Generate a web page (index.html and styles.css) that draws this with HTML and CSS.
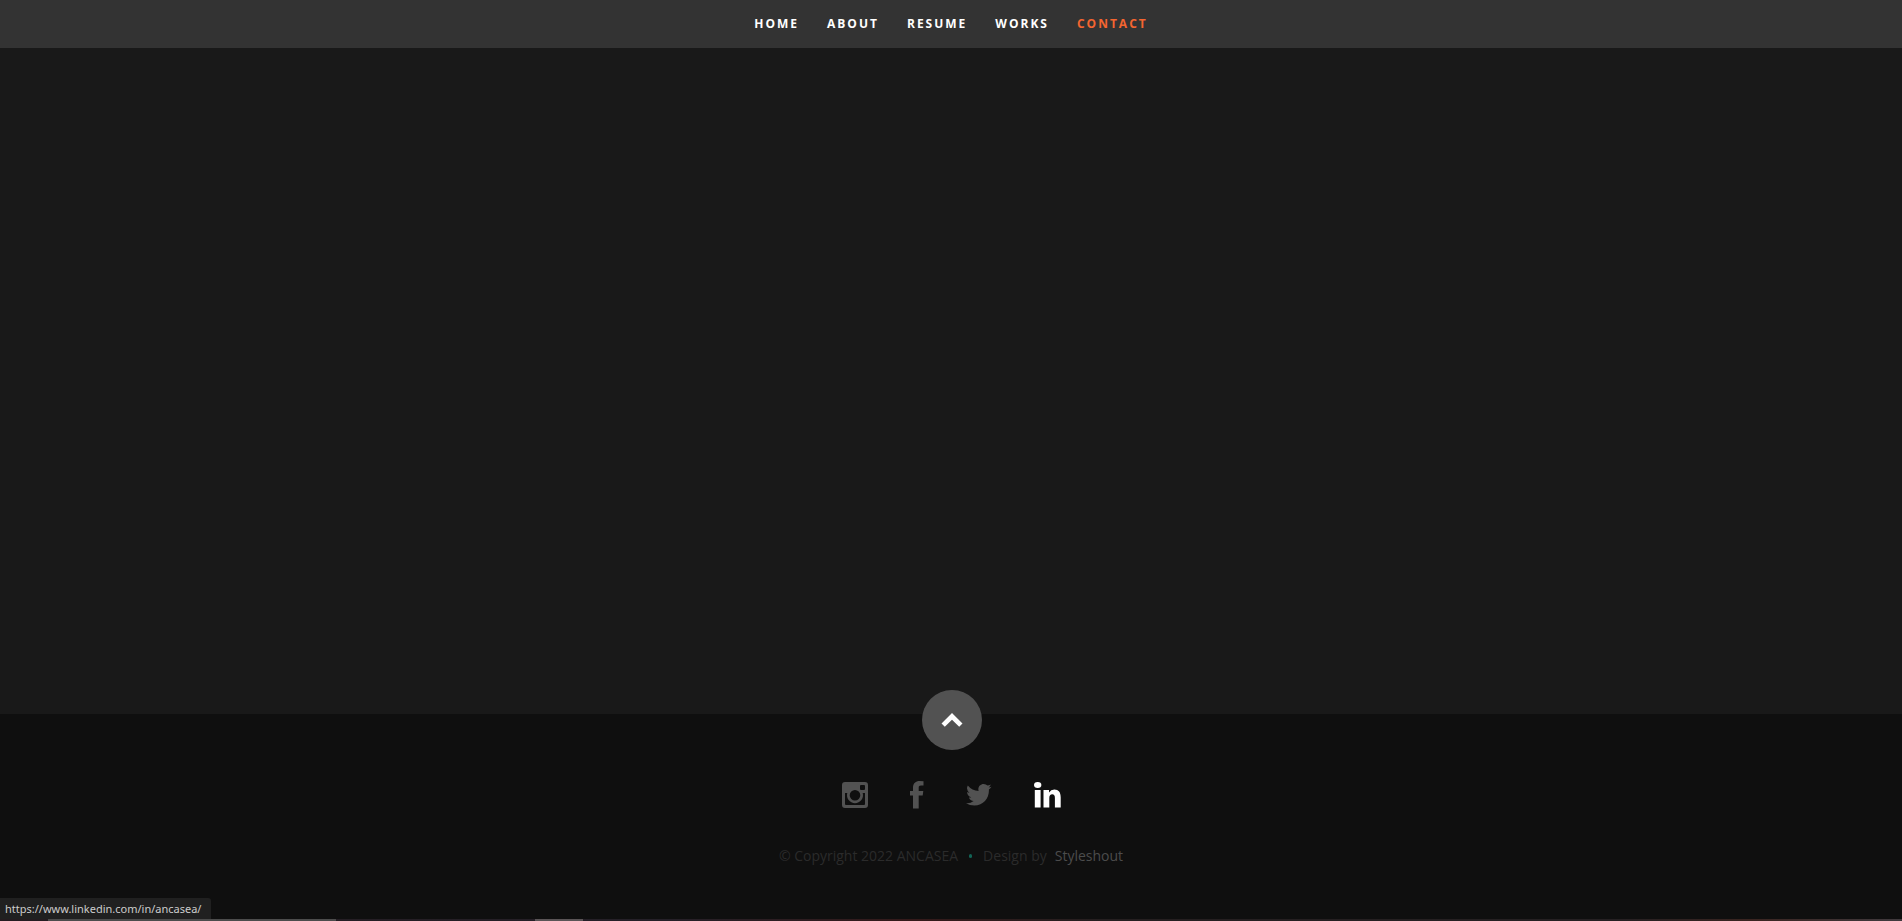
FILE: index.html
```html
<!DOCTYPE html>
<html lang="en">
<head>
<meta charset="utf-8">
<title>ANCASEA</title>
<link rel="stylesheet" href="styles.css">
</head>
<body>
<header class="site-header">
  <nav class="nav" aria-label="Main">
    <a class="nav-link" href="#home">HOME</a>
    <a class="nav-link" href="#about">ABOUT</a>
    <a class="nav-link" href="#resume">RESUME</a>
    <a class="nav-link" href="#works">WORKS</a>
    <a class="nav-link nav-link-current" href="#contact">CONTACT</a>
  </nav>
</header>
<main class="contact" id="contact"></main>
<footer class="site-footer">
  <a class="go-top" href="#home" aria-label="Back to top">
    <svg width="22" height="14" viewBox="0 0 22 14"><path fill="#fff" d="M11 0 21.500 10.500 18.200 13.800 11 6.800 3.800 13.800 .5 10.500Z"/></svg>
  </a>
  <div class="social">
    <a class="social-link" href="#instagram" aria-label="Instagram">
      <svg width="26" height="26" viewBox="0 0 26 26"><path fill="currentColor" fill-rule="evenodd" d="M3 0H23Q26 0 26 3V23Q26 26 23 26H3Q0 26 0 23V3Q0 0 3 0ZM19 3Q18 3 18 4V7Q18 8 19 8H22Q23 8 23 7V4Q23 3 22 3ZM3 11V22Q3 23 4 23H22Q23 23 23 22V11H20.700A8 8 0 1 1 5.300 11ZM13 8A5.300 5.300 0 1 0 13 18.600A5.300 5.300 0 1 0 13 8Z"/></svg>
    </a>
    <a class="social-link" href="#facebook" aria-label="Facebook">
      <svg width="14" height="28" viewBox="0 0 14 28"><path fill="currentColor" d="M13.500 .2V4.600H11C9 4.600 8.700 5.500 8.700 6.900V10H13.300L12.700 14.600H8.700V27.500H3V14.600H0V10H3V6.300C3 2.300 5.800 0 9.600 0Q12.200 0 13.500 .2Z"/></svg>
    </a>
    <a class="social-link" href="#twitter" aria-label="Twitter">
      <svg width="26" height="22" viewBox="0 0 26 22"><path fill="currentColor" d="M25.500 2.700Q24.500 4.300 22.900 5.400C23.400 13.500 17.700 21.500 8.300 21.500Q3.700 21.500 0 19.200Q4.300 19.600 7.700 17Q4.100 16.800 2.900 13.400Q4.100 13.600 5.200 13.200Q1.100 12.100 1.100 8Q2.200 8.700 3.400 8.700Q-.4 5.600 1.800 1.500Q6 6.700 12.600 7C11.500 3.300 14 0 17.700 0Q20 0 21.500 1.600Q23.200 1.300 24.800 .4Q24.200 2.200 22.600 3.300Q24.100 3.200 25.500 2.700Z"/></svg>
    </a>
    <a class="social-link social-link-hover" href="https://www.linkedin.com/in/ancasea/" aria-label="LinkedIn">
      <svg width="27" height="26" viewBox="0 0 27 26"><g fill="currentColor"><ellipse cx="3.700" cy="3" rx="3.700" ry="3"/><path d="M.8 8H6.600V25.500H.8ZM9.500 8H15V10.500Q16.900 7.600 20.300 7.600C24.600 7.600 26.700 10.400 26.700 15.200V25.500H20.900V15.900Q20.900 12.300 18.300 12.300Q15.300 12.300 15.300 15.900V25.500H9.500Z"/></g></svg>
    </a>
  </div>
  <div class="copyright">
    <span>© Copyright 2022 ANCASEA</span>
    <span class="dot"></span>
    <span>Design by</span>
    <a class="credit" href="#styleshout">Styleshout</a>
  </div>
</footer>
<div class="status">https://www.linkedin.com/in/ancasea/</div>
<div class="edge"><div class="edge-window"></div><div class="edge-tab"></div></div>
</body>
</html>
```
FILE: styles.css
```css
* { box-sizing: border-box; }
body {
  margin: 0;
  min-height: 100vh;
  display: flex;
  flex-direction: column;
  position: relative;
  background: #191919;
  font-family: "Open Sans", sans-serif;
}
a { text-decoration: none; }
svg { display: block; }
.site-header { background: #333; }
.nav {
  display: flex;
  justify-content: center;
  gap: 28px;
}
.nav-link {
  color: #fff;
  font-size: 12px;
  font-weight: 700;
  line-height: 48px;
  letter-spacing: 2px;
}
.nav-link-current { color: #f46530; }
.contact { flex: 1; }
.site-footer {
  position: relative;
  padding: 66px 0 50px;
  background: #0f0f0f;
}
.go-top {
  position: absolute;
  top: -24px;
  left: 50%;
  width: 60px;
  height: 60px;
  margin-left: -29px;
  border-radius: 50%;
  background: #525252;
  display: flex;
  align-items: center;
  justify-content: center;
}
.social {
  display: flex;
  justify-content: center;
  align-items: center;
  gap: 42px;
  height: 30px;
}
.social-link { color: #525252; }
.social-link-hover { color: #fff; }
.copyright {
  display: flex;
  justify-content: center;
  align-items: center;
  margin-top: 31px;
  font-size: 14px;
  line-height: 30px;
  font-weight: 400;
  color: #2b2b2b;
}
.dot {
  width: 3px;
  height: 4px;
  margin: 0 11px;
  border-radius: 2px;
  background: #126456;
}
.credit { margin-left: 8px; color: #4c4c4c; }
.status {
  position: absolute;
  left: 0;
  bottom: 2px;
  padding: 0 10px 0 5px;
  border-radius: 0 3px 0 0;
  background: #202020;
  color: #ccc;
  font: 11px/21px "Noto Sans", sans-serif;
}
.edge {
  position: absolute;
  left: 0;
  right: 0;
  bottom: 0;
  height: 2px;
  background: linear-gradient(90deg, #241c20, #252028 35%, #351a1a 48%, #251f20 58%, #252022 85%, #3a2420 92%, #403a3e);
}
.edge-window, .edge-tab { position: absolute; top: 0; height: 2px; }
.edge-window { left: 48px; width: 288px; background: #4c4c4c; }
.edge-tab { left: 535px; width: 48px; background: #5a5456; }
```
